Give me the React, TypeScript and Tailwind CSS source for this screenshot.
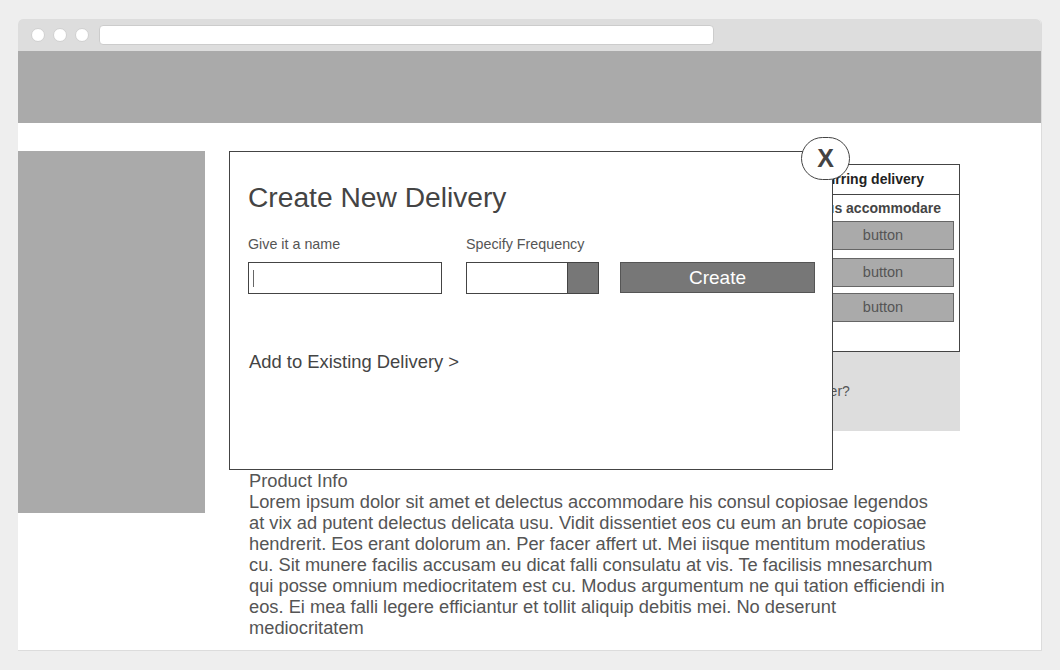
export default function App() {
  const lorem =
    "Lorem ipsum dolor sit amet et delectus accommodare his consul copiosae legendos at vix ad putent delectus delicata usu. Vidit dissentiet eos cu eum an brute copiosae hendrerit. Eos erant dolorum an. Per facer affert ut. Mei iisque mentitum moderatius cu. Sit munere facilis accusam eu dicat falli consulatu at vis. Te facilisis mnesarchum qui posse omnium mediocritatem est cu. Modus argumentum ne qui tation efficiendi in eos. Ei mea falli legere efficiantur et tollit aliquip debitis mei. No deserunt mediocritatem";

  return (
    <div
      className="w-[1060px] h-[670px] bg-[#eeeeee] pt-[19px] pl-[18px] overflow-hidden"
      style={{ fontFamily: '"Liberation Sans", Arial, sans-serif' }}
    >
      <div className="w-[1024px] h-[632px] flex flex-col rounded-t-[5px] bg-white border-r border-b border-[#dcdcdc] relative">
        {/* browser chrome */}
        <div className="h-[32px] bg-[#dddddd] rounded-t-[5px] flex items-center pl-[13px] gap-[8px] shrink-0">
          <div className="w-[14px] h-[14px] rounded-full bg-white border border-[#d0d0d0]" />
          <div className="w-[14px] h-[14px] rounded-full bg-white border border-[#d0d0d0]" />
          <div className="w-[14px] h-[14px] rounded-full bg-white border border-[#d0d0d0]" />
          <div className="ml-[2px] w-[615px] h-[20px] rounded-[4px] bg-white border border-[#cccccc]" />
        </div>
        {/* site header */}
        <div className="h-[72px] bg-[#aaaaaa] shrink-0" />

        {/* content */}
        <div className="flex pt-[28px]">
          <div className="w-[187px] h-[362px] bg-[#aaaaaa] shrink-0" />
          <div className="ml-[44px] w-[712px] flex flex-col">
            <div className="h-[319px] flex justify-end">
              <div className="w-[280px] mt-[13px] flex flex-col mr-[1px]">
                <div className="border border-[#444] flex flex-col h-[188px]">
                  <div className="h-[30px] border-b border-[#444] flex items-center justify-end pr-[35px] text-[14px] font-bold text-[#222] whitespace-nowrap">
                    Make this a recurring delivery
                  </div>
                  <div className="flex justify-end pr-[18px] pt-[5px] text-[14px] leading-[17px] font-bold text-[#444] whitespace-nowrap">
                    Lorem delectus accommodare
                  </div>
                  <div className="flex flex-col items-end pr-[5px] pt-[4px]">
                    <div className="w-[240px] h-[29px] bg-[#aaaaaa] border border-[#666] flex items-center justify-center pl-[98px] text-[14.5px] text-[#555]">
                      button
                    </div>
                    <div className="w-[240px] h-[29px] mt-[8px] bg-[#aaaaaa] border border-[#666] flex items-center justify-center pl-[98px] text-[14.5px] text-[#555]">
                      button
                    </div>
                    <div className="w-[240px] h-[29px] mt-[6px] bg-[#aaaaaa] border border-[#666] flex items-center justify-center pl-[98px] text-[14.5px] text-[#555]">
                      button
                    </div>
                  </div>
                </div>
                <div className="h-[79px] bg-[#dddddd] flex items-center pl-[71px] text-[14px] text-[#555]">
                  Need it sooner?
                </div>
              </div>
            </div>
            <div className="text-[18.3px] leading-[21px] text-[#555]">
              <div>Product Info</div>
              <p className="w-[697px]">{lorem}</p>
            </div>
          </div>
        </div>

        {/* modal */}
        <div className="absolute left-[211px] top-[132px] w-[604px] h-[319px] bg-white border border-[#444]">
          <div className="pl-[18px] pt-[29px]">
            <h1 className="text-[28.2px] leading-[32px] text-[#444]">Create New Delivery</h1>
            <div className="flex mt-[22px]">
              <div className="flex flex-col w-[218px]">
                <label className="text-[14.3px] leading-[18px] text-[#555]">Give it a name</label>
                <div className="mt-[9px] w-[194px] h-[32px] border border-[#444] flex items-center pl-[4px]">
                  <div className="w-[1px] h-[17px] bg-[#666]" />
                </div>
              </div>
              <div className="flex flex-col w-[154px]">
                <label className="text-[14.3px] leading-[18px] text-[#555]">Specify Frequency</label>
                <div className="mt-[9px] w-[133px] h-[32px] border border-[#444] flex">
                  <div className="flex-1" />
                  <div className="w-[31px] bg-[#777777] border-l border-[#444]" />
                </div>
              </div>
              <div className="flex flex-col">
                <div className="h-[18px]" />
                <button className="mt-[9px] w-[195px] h-[31px] bg-[#777777] border border-[#555] text-white text-[19px] leading-[22px]">
                  Create
                </button>
              </div>
            </div>
            <div className="mt-[57px] pl-[1px] text-[18.4px] leading-[22px] text-[#444]">
              Add to Existing Delivery &gt;
            </div>
          </div>
          <div className="absolute -right-[18px] -top-[15px] w-[49px] h-[43px] rounded-full bg-white border border-[#444] flex items-center justify-center text-[25px] font-bold text-[#444]">
            X
          </div>
        </div>
      </div>
    </div>
  );
}
